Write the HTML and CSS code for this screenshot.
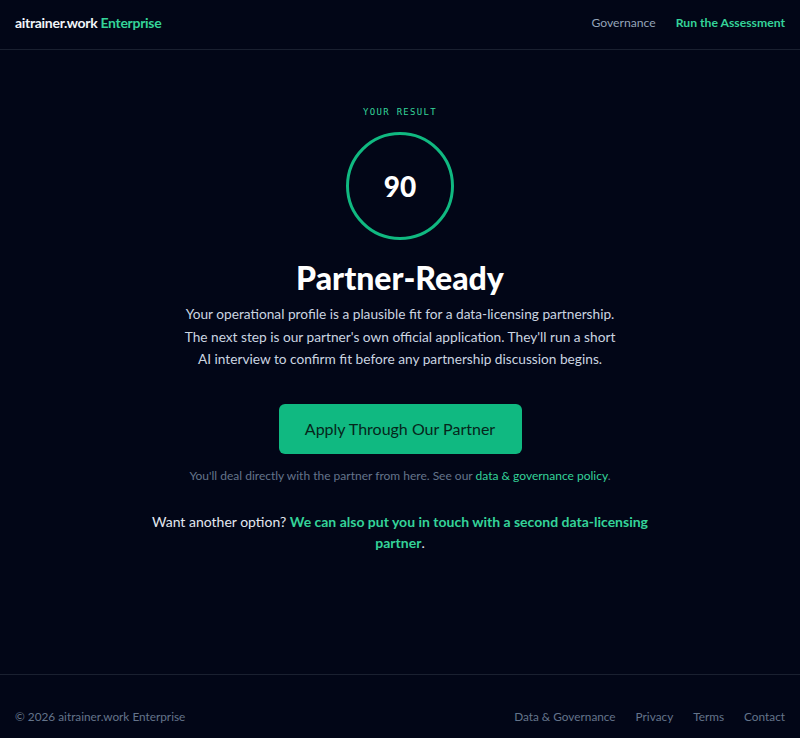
FILE: index.html
```html
<!DOCTYPE html>
<html lang="en">
<head>
  <meta charset="UTF-8" />
  <meta name="viewport" content="width=device-width, initial-scale=1.0"/>
  <title>Your Result – aitrainer.work Enterprise</title>
  <link rel="stylesheet" href="styles.css">
</head>
<body>

  <header class="topbar">
    <a href="#" class="brand">aitrainer.work <span>Enterprise</span></a>
    <nav class="topnav">
      <a href="#">Governance</a>
      <a href="#" class="cta">Run the Assessment</a>
    </nav>
  </header>

  <main class="result">
    <p class="eyebrow">YOUR RESULT</p>
    <div class="score-ring">90</div>
    <h1>Partner-Ready</h1>
    <p class="summary">Your operational profile is a plausible fit for a data-licensing partnership. The next step is our partner's own official application. They'll run a short AI interview to confirm fit before any partnership discussion begins.</p>

    <a href="#" class="btn-apply">Apply Through Our Partner</a>

    <p class="note">You'll deal directly with the partner from here. See our <a href="#">data &amp; governance policy</a>.</p>

    <p class="alt">Want another option? <a href="#">We can also put you in touch with a second data-licensing partner</a>.</p>
  </main>

  <footer class="site-footer">
    <span>&copy; 2026 aitrainer.work Enterprise</span>
    <nav class="footnav">
      <a href="#">Data &amp; Governance</a>
      <a href="#">Privacy</a>
      <a href="#">Terms</a>
      <a href="#">Contact</a>
    </nav>
  </footer>

</body>
</html>
```

FILE: styles.css
```css
* { box-sizing: border-box; margin: 0; padding: 0; }

html, body { height: 100%; }

body {
  font-family: 'Lato', 'Open Sans', sans-serif;
  background-color: #020617;
  color: #cbd5e1;
  display: flex;
  flex-direction: column;
}

a { text-decoration: none; }

/* top bar */
.topbar {
  height: 50px;
  border-bottom: 1px solid #1a2030;
  display: flex;
  align-items: center;
  justify-content: space-between;
  padding: 0 15px 5px;
}

.brand {
  color: #f1f5f9;
  font-weight: 700;
  font-size: 14px;
  letter-spacing: -0.3px;
}

.brand span { color: #34d399; }

.topnav {
  display: flex;
  gap: 20px;
  font-size: 12.2px;
}

.topnav a { color: #94a3b8; }

.topnav .cta {
  color: #34d399;
  font-weight: 700;
}

/* result block */
.result {
  flex: 1;
  display: flex;
  flex-direction: column;
  align-items: center;
  text-align: center;
  padding-top: 57px;
}

.eyebrow {
  font-family: 'DejaVu Sans Mono', 'Liberation Mono', monospace;
  font-size: 9px;
  letter-spacing: 1.3px;
  color: #34d399;
  margin-bottom: 15px;
}

.score-ring {
  width: 108px;
  height: 108px;
  border: 3.5px solid #10b981;
  border-radius: 50%;
  display: flex;
  align-items: center;
  justify-content: center;
  color: #fff;
  font-size: 28px;
  font-weight: 900;
}

h1 {
  margin-top: 18px;
  color: #fff;
  font-size: 32px;
  font-weight: 900;
  line-height: 1.25;
}

.summary {
  max-width: 436px;
  margin-top: 5px;
  font-size: 13.7px;
  line-height: 22.5px;
}

.btn-apply {
  margin-top: 33px;
  display: block;
  width: 243px;
  height: 50px;
  line-height: 50px;
  border-radius: 6px;
  background-color: #10b981;
  color: #06261b;
  font-size: 16px;
}

.note {
  margin-top: 14px;
  font-size: 12px;
  color: #64748b;
}

.note a { color: #34d399; }

.alt {
  margin-top: 28px;
  max-width: 500px;
  font-size: 14px;
  line-height: 21.5px;
  color: #e2e8f0;
}

.alt a {
  color: #34d399;
  font-weight: 700;
}

/* footer */
.site-footer {
  border-top: 1px solid #1a2030;
  height: 64px;
  display: flex;
  align-items: flex-end;
  justify-content: space-between;
  padding: 0 15px 14px;
  font-size: 11.8px;
  color: #64748b;
}

.footnav {
  display: flex;
  gap: 20px;
}

.footnav a { color: #64748b; }
```
